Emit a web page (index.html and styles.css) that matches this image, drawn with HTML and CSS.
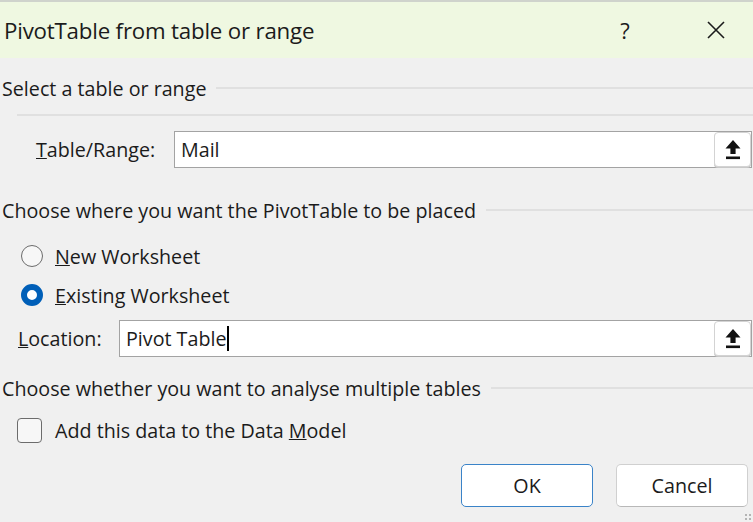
FILE: index.html
```html
<!DOCTYPE html>
<html lang="en">
<head>
<meta charset="utf-8">
<title>PivotTable from table or range</title>
<link rel="stylesheet" href="styles.css">
</head>
<body>
<div class="dialog">
  <div class="topstrip"></div>
  <header class="titlebar">
    <span class="title">PivotTable from table or range</span>
    <span class="help">?</span>
    <span class="close" aria-label="Close">
      <svg width="20" height="20" viewBox="0 0 20 20"><path d="M2 2 L18 18 M18 2 L2 18" stroke="#1b1b1b" stroke-width="1.6" fill="none"/></svg>
    </span>
  </header>
  <main class="body">
    <div class="group-head g1"><span>Select a table or range</span></div>
    <div class="rule"></div>
    <div class="field-row r-range">
      <label class="lbl lbl-range"><u>T</u>able/Range:</label>
      <div class="input">
        <span class="value">Mail</span>
        <span class="pick"><svg width="18" height="21" viewBox="0 0 18 21"><path d="M9 1 L16.5 9.5 L11.6 9.5 L11.6 15 L6.4 15 L6.4 9.5 L1.5 9.5 Z" fill="#111"/><rect x="2" y="17.5" width="14" height="2.6" fill="#111"/></svg></span>
      </div>
    </div>
    <div class="group-head g2"><span>Choose where you want the PivotTable to be placed</span></div>
    <div class="option r-new">
      <span class="radio"></span>
      <span class="opt-text"><u>N</u>ew Worksheet</span>
    </div>
    <div class="option r-exist">
      <span class="radio checked"></span>
      <span class="opt-text"><u>E</u>xisting Worksheet</span>
    </div>
    <div class="field-row r-loc">
      <label class="lbl lbl-loc"><u>L</u>ocation:</label>
      <div class="input">
        <span class="value">Pivot Table<span class="caret"></span></span>
        <span class="pick"><svg width="18" height="21" viewBox="0 0 18 21"><path d="M9 1 L16.5 9.5 L11.6 9.5 L11.6 15 L6.4 15 L6.4 9.5 L1.5 9.5 Z" fill="#111"/><rect x="2" y="17.5" width="14" height="2.6" fill="#111"/></svg></span>
      </div>
    </div>
    <div class="group-head g3"><span>Choose whether you want to analyse multiple tables</span></div>
    <div class="option r-check">
      <span class="checkbox"></span>
      <span class="opt-text">Add this data to the Data <u>M</u>odel</span>
    </div>
    <div class="buttons">
      <button class="btn btn-default">OK</button>
      <button class="btn">Cancel</button>
    </div>
    <div class="grip"></div>
  </main>
</div>
</body>
</html>
```
FILE: styles.css
```css
* { box-sizing: border-box; }
html, body { margin: 0; padding: 0; }
body {
  width: 753px;
  height: 522px;
  overflow: hidden;
  background: #f0f0f0;
  font-family: "Open Sans", "Noto Sans", sans-serif;
  color: #1b1b1b;
}
.dialog { position: relative; width: 753px; height: 522px; display: flex; flex-direction: column; }
.topstrip { height: 2px; background: #cfd3cc; }
.titlebar {
  height: 56px;
  background: #eff8e1;
  display: flex;
  align-items: center;
  padding-left: 4px;
}
.title { font-size: 22.3px; flex: 1; letter-spacing: -0.2px; }
.help { font-size: 22px; width: 24px; text-align: center; margin-right: 69px; }
.close { width: 20px; height: 20px; margin-right: 27px; display: flex; }
.body { position: relative; flex: 1; font-size: 19.7px; }
.group-head {
  height: 28px;
  display: flex;
  align-items: center;
  padding-left: 2px;
  white-space: nowrap;
}
.group-head::after {
  content: "";
  flex: 1;
  height: 2px;
  background: #e0e0e0;
  margin-left: 10px;
}
.g1 { margin-top: 16px; }
.g2 { margin-top: 28px; }
.g3 { margin-top: 17px; }
.rule { height: 2px; background: #e0e0e0; margin: 12px 0 0 17px; }
.field-row { display: flex; align-items: center; height: 37px; }
.r-range { margin-top: 15px; }
.r-loc { margin-top: 11px; }
.lbl { white-space: nowrap; }
.lbl-range { padding-left: 36px; width: 174px; }
.lbl-loc { padding-left: 18px; width: 119px; }
.input {
  flex: 1;
  height: 37px;
  margin-right: 1px;
  background: #fff;
  border: 1px solid #a3a3a3;
  display: flex;
  align-items: center;
  padding-left: 6px;
}
.value { flex: 1; display: flex; align-items: center; }
.caret { display: inline-block; width: 1.5px; height: 25px; background: #000; margin-left: 1px; }
.pick {
  width: 37px;
  height: 35px;
  border: 1px solid #d3d3d3;
  border-radius: 4px;
  background: #fff;
  display: flex;
  align-items: center;
  justify-content: center;
  box-shadow: 0 1px 0 #c8c8c8;
}
.option { display: flex; align-items: center; height: 28px; }
.r-new { margin-top: 18px; }
.r-exist { margin-top: 11px; }
.r-check { margin-top: 14px; }
.radio {
  width: 22px; height: 22px;
  margin-left: 21px; margin-right: 12px;
  border-radius: 50%;
  border: 1.5px solid #6c6c6c;
  background: #f7f7f7;
}
.radio.checked {
  border: 6.5px solid #005fb8;
  background: #fff;
}
.checkbox {
  width: 25px; height: 25px;
  margin-left: 17px; margin-right: 13px;
  border: 1.5px solid #6c6c6c;
  border-radius: 4px;
  background: #f7f7f7;
}
.opt-text { white-space: nowrap; }
.buttons {
  display: flex;
  justify-content: flex-end;
  gap: 23px;
  margin-top: 20px;
  padding-right: 5px;
}
.btn {
  width: 132px;
  height: 43px;
  background: #fff;
  border: 1px solid #d0d0d0;
  border-bottom-color: #b8b8b8;
  border-radius: 5px;
  font-family: inherit;
  font-size: 19.7px;
  color: #1b1b1b;
}
.btn-default { border: 1.5px solid #3a83c8; }
.grip {
  position: absolute; right: 1px; bottom: 1px;
  width: 8px; height: 8px;
  background:
    radial-gradient(circle, #b4b4b4 1.3px, transparent 1.5px) 0 0 / 4px 4px;
}
```
